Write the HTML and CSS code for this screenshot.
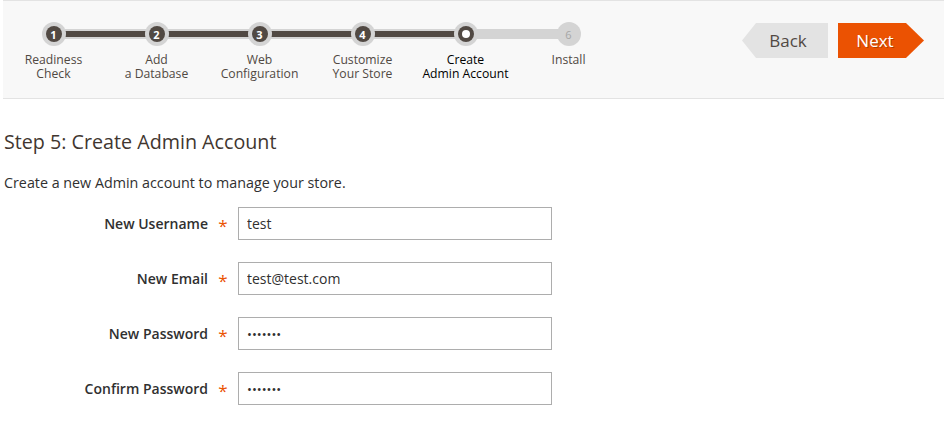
FILE: index.html
```html
<!DOCTYPE html>
<html>
<head>
<meta charset="utf-8">
<link rel="stylesheet" href="styles.css">
</head>
<body>
<div class="page">
  <header class="nav">
    <ol class="steps">
      <li class="step done"><span class="dot">1</span><span class="label"><span class="ln">Readiness</span><span class="ln">Check</span></span></li>
      <li class="step done"><span class="dot">2</span><span class="label"><span class="ln">Add</span><span class="ln">a Database</span></span></li>
      <li class="step done"><span class="dot">3</span><span class="label"><span class="ln">Web</span><span class="ln">Configuration</span></span></li>
      <li class="step done"><span class="dot">4</span><span class="label"><span class="ln">Customize</span><span class="ln">Your Store</span></span></li>
      <li class="step active"><span class="dot"></span><span class="label"><span class="ln">Create</span><span class="ln">Admin Account</span></span></li>
      <li class="step todo"><span class="dot">6</span><span class="label"><span class="ln">Install</span></span></li>
    </ol>
    <div class="actions">
      <button class="btn back">Back</button>
      <button class="btn next">Next</button>
    </div>
  </header>
  <main class="content">
    <h1 class="title">Step 5: Create Admin Account</h1>
    <p class="intro">Create a new Admin account to manage your store.</p>
    <form class="form">
      <div class="row"><label class="lbl">New Username</label><span class="req">*</span><input class="field" type="text" value="test"></div>
      <div class="row"><label class="lbl">New Email</label><span class="req">*</span><input class="field" type="text" value="test@test.com"></div>
      <div class="row"><label class="lbl">New Password</label><span class="req">*</span><input class="field pw" type="password" value="1234567"></div>
      <div class="row"><label class="lbl">Confirm Password</label><span class="req">*</span><input class="field pw" type="password" value="1234567"></div>
    </form>
  </main>
</div>
</body>
</html>
```
FILE: styles.css
```css
* { box-sizing: border-box; }
html, body { margin: 0; padding: 0; background: #fff; }
body {
  font-family: "Open Sans", "Liberation Sans", sans-serif;
  color: #303030;
}
.page { padding-left: 3px; }
.nav {
  height: 99px;
  background: #f8f8f8;
  border-top: 1px solid #e3e3e3;
  border-bottom: 1px solid #e3e3e3;
  display: flex;
  justify-content: space-between;
}
.steps {
  list-style: none;
  margin: 0 0 0 -1px;
  padding: 21px 0 0 0;
  display: flex;
}
.step {
  width: 103px;
  display: flex;
  flex-direction: column;
  align-items: center;
  position: relative;
}
.step::before {
  content: "";
  position: absolute;
  left: 51.5px;
  top: 7px;
  width: 103px;
  height: 10px;
  background: #d4d4d4;
  z-index: 0;
}
.step.done::after {
  content: "";
  position: absolute;
  left: 51.5px;
  top: 9px;
  width: 103px;
  height: 6px;
  background: #514943;
  z-index: 1;
}
.step.todo::before { display: none; }
.dot {
  position: relative;
  z-index: 2;
  isolation: isolate;
  width: 24px;
  height: 24px;
  border-radius: 50%;
  background: #d4d4d4;
  display: flex;
  align-items: center;
  justify-content: center;
  font-size: 11px;
  font-weight: 700;
  color: #fff;
}
.step.done .dot::before,
.step.active .dot::before {
  content: "";
  position: absolute;
  left: 4px;
  top: 4px;
  width: 16px;
  height: 16px;
  border-radius: 50%;
  background: #514943;
  z-index: -1;
}
.step.active .dot::after {
  content: "";
  width: 8px;
  height: 8px;
  border-radius: 50%;
  background: #fff;
}
.step.todo .dot { color: #a6a6a6; font-weight: 400; font-size: 11px; }
.label {
  margin-top: 7px;
  display: flex;
  flex-direction: column;
  align-items: center;
  font-size: 12.2px;
  color: #514943;
  white-space: nowrap;
}
.ln { display: block; height: 14px; line-height: 14px; }
.step.active .label { color: #000; }
.actions {
  display: flex;
  padding-top: 22px;
  padding-right: 20px;
  gap: 10px;
  align-items: flex-start;
}
.btn {
  font-family: "Open Sans", "Liberation Sans", sans-serif;
  font-size: 17px;
  height: 35px;
  border: 0;
  padding: 0;
  cursor: pointer;
}
.back {
  width: 86px;
  padding-left: 6px;
  background: #e3e3e3;
  color: #514943;
  clip-path: polygon(14px 0, 100% 0, 100% 100%, 14px 100%, 0 50%);
}
.next {
  width: 86px;
  padding-right: 12px;
  background: #eb5202;
  color: #fff;
  text-shadow: 1px 1px 0 rgba(0,0,0,0.25);
  clip-path: polygon(0 0, calc(100% - 18px) 0, 100% 50%, calc(100% - 18px) 100%, 0 100%);
}
.content { padding-left: 1px; }
.title {
  margin: 29px 0 0 0;
  font-size: 19.7px;
  line-height: 28px;
  font-weight: 400;
  color: #41362f;
}
.intro {
  margin: 17px 0 0 0;
  font-size: 14.3px;
  line-height: 20px;
}
.form {
  margin-top: 14px;
  display: flex;
  flex-direction: column;
  gap: 22px;
}
.row {
  display: flex;
  align-items: center;
}
.lbl {
  width: 204px;
  text-align: right;
  font-size: 14px;
  font-weight: 600;
  color: #303030;
}
.req {
  width: 30px;
  text-align: center;
  color: #eb5202;
  font-size: 17px;
  padding-top: 4px;
}
.field {
  width: 314px;
  height: 33px;
  border: 1px solid #adadad;
  padding: 0 8px;
  font-family: "Open Sans", "Liberation Sans", sans-serif;
  font-size: 14px;
  color: #303030;
  background: #fff;
}
.field.pw { font-size: 13px; }
```
